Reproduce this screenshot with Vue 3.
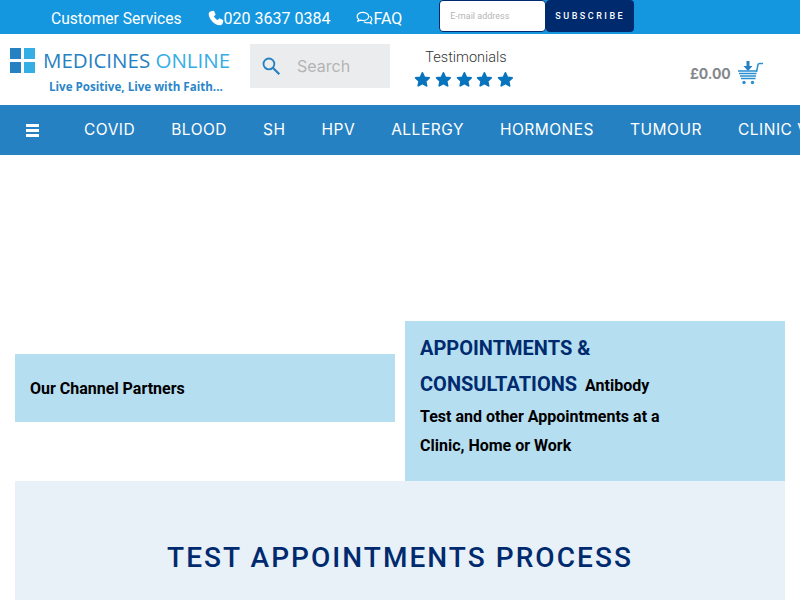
<template>
  <div class="page">
    <div class="topbar">
      <span class="top-item services">Customer Services</span>
      <span class="top-item phone">
        <svg class="ico" viewBox="0 0 24 24" width="16" height="16"><path fill="#fff" d="M5.500 1.500 9 1l2.500 6-2.600 2.200c1 2.400 3.200 4.600 5.700 5.800L17 12.500l6 2.700-.6 3.600C22 21 20.500 23 18 23 9.500 22.500 1.500 14 1 6c0-2.200 2-4 4.500-4.500z"/></svg>020 3637 0384
      </span>
      <span class="top-item faq">
        <svg class="ico" viewBox="0 0 24 20" width="17" height="14"><g fill="none" stroke="#fff" stroke-width="1.700"><path d="M9.500 2C5 2 1.500 4.500 1.500 7.800c0 1.600.8 3 2.200 4l-1.200 2.700 3.600-1.500c1.200.4 2.500.6 3.900.6 4.500 0 8-2.600 8-5.800S14 2 9.500 2z"/><path d="M19.500 7.500c1.900 1 3 2.500 3 4.300 0 1.300-.7 2.500-1.800 3.400l1 2.800-3.400-1.500c-2.500.7-5.300.3-7.300-1"/></g></svg>FAQ
      </span>
      <form class="subscribe" @submit.prevent>
        <input class="email" type="text" placeholder="E-mail address" />
        <button class="sub-btn" type="button">SUBSCRIBE</button>
      </form>
    </div>

    <header class="header">
      <div class="logo">
        <div class="logo-top">
          <span class="squares"><i class="dk"></i><i class="lt"></i><i class="dk"></i><i class="lt"></i></span>
          <span class="logo-name">MEDICINES <b>ONLINE</b></span>
        </div>
        <div class="tagline">Live Positive, Live with Faith...</div>
      </div>
      <div class="search">
        <svg viewBox="0 0 24 24" width="20" height="20"><circle cx="9.500" cy="9.500" r="6.500" fill="none" stroke="#2681c2" stroke-width="2.200"/><path d="M14.500 14.500 22 22" stroke="#2681c2" stroke-width="2.600"/></svg>
        <span class="search-text">Search</span>
      </div>
      <div class="testimonials">
        <div class="test-label">Testimonials</div>
        <div class="stars">
          <svg v-for="n in 5" :key="n" viewBox="0 0 24 24" width="17" height="17"><path fill="#0874bd" stroke="#0874bd" stroke-width="2.400" stroke-linejoin="round" d="M12 2.500l2.900 6.300 6.800.8-5 4.700 1.300 6.800-6-3.400-6 3.400 1.300-6.800-5-4.700 6.800-.8z"/></svg>
        </div>
      </div>
      <div class="cart">
        <span class="price">£0.00</span>
        <svg viewBox="0 0 26 24" width="26" height="24">
          <path fill="#2681c2" d="M8.500 0h3v5h3l-4.500 5-4.500-5h3z"/>
          <path fill="none" stroke="#2a90d0" stroke-width="1.500" d="M18.500 11 20 3.500Q20.300 2.500 21.500 2.500H25"/>
          <path stroke="#2a90d0" stroke-width="1.600" d="M0 10h19M1 12.500h17.500M2 15h16M3 17.500h14.500"/>
          <circle cx="6" cy="21.500" r="1.700" fill="#2a90d0"/><circle cx="14.500" cy="21.500" r="1.700" fill="#2a90d0"/>
        </svg>
      </div>
    </header>

    <nav class="nav">
      <span class="burger"><i></i><i></i><i></i></span>
      <a v-for="item in navItems" :key="item" class="nav-link">{{ item }}</a>
    </nav>

    <div class="spacer"></div>

    <section class="cards">
      <div class="card partners">Our Channel Partners</div>
      <div class="card appts">
        <span class="appts-title">APPOINTMENTS &amp;</span> <span class="appts-title">CONSULTATIONS</span>&nbsp; Antibody Test and other Appointments at a Clinic, Home or Work
      </div>
    </section>

    <section class="process">
      <h2>TEST APPOINTMENTS PROCESS</h2>
    </section>
  </div>
</template>

<script setup>
const navItems = ['COVID', 'BLOOD', 'SH', 'HPV', 'ALLERGY', 'HORMONES', 'TUMOUR', 'CLINIC VISITS']
</script>

<style>
html, body {
  margin: 0;
  overflow: hidden;
}
</style>

<style scoped>
.page {
  width: 800px;
  height: 600px;
  overflow: hidden;
  background: #fff;
  font-family: Roboto, "Liberation Sans", sans-serif;
}

.topbar {
  height: 34px;
  background: #1597df;
  display: flex;
  color: #fff;
  font-size: 16px;
}

.top-item {
  display: flex;
  align-items: center;
  height: 36px;
  white-space: nowrap;
}

.services { margin-left: 51px; font-size: 15.600px; height: 37px; }
.phone { margin-left: 26px; }
.faq { margin-left: 26px; }
.ico { flex: none; }

.subscribe {
  display: flex;
  margin-left: 37px;
  height: 32px;
}

.email {
  width: 107px;
  height: 32px;
  box-sizing: border-box;
  border: 1px solid #002a6e;
  border-radius: 4px;
  background: #fff;
  padding: 0 10px;
  font-family: Roboto, sans-serif;
  font-size: 9px;
  outline: none;
}

.email::placeholder { color: #b5b5b5; }

.sub-btn {
  width: 88px;
  height: 32px;
  border: none;
  border-radius: 4px;
  background: #002a6e;
  color: #fff;
  font-family: Roboto, sans-serif;
  font-size: 9px;
  font-weight: 500;
  letter-spacing: 2.500px;
  padding: 0;
}

.header {
  height: 71px;
  display: flex;
  align-items: flex-start;
}

.logo {
  width: 240px;
  padding: 12px 0 0 10px;
  box-sizing: border-box;
}

.logo-top {
  display: flex;
  align-items: center;
  gap: 8px;
}

.squares {
  display: grid;
  grid-template-columns: 11px 11px;
  grid-template-rows: 11px 11px;
  gap: 3px;
}

.squares i { display: block; }
.dk { background: #2681c2; }
.lt { background: #35ade5; }

.logo-name {
  font-family: "Open Sans", sans-serif;
  font-size: 20.500px;
  line-height: 28px;
  color: #2681c2;
  white-space: nowrap;
}

.logo-name b {
  font-weight: 400;
  color: #35ade5;
}

.tagline {
  margin: 5px 0 0 39px;
  font-family: "Open Sans", sans-serif;
  font-size: 11.600px;
  font-weight: 700;
  color: #2b86c9;
  white-space: nowrap;
}

.search {
  margin: 10px 0 0 10px;
  width: 140px;
  height: 44px;
  background: #ebecee;
  display: flex;
  align-items: center;
  padding-left: 11px;
  box-sizing: border-box;
}

.search-text {
  margin-left: 16px;
  font-family: Inter, sans-serif;
  font-size: 16px;
  color: #b4b4b4;
}

.testimonials {
  margin: 14px 0 0 24px;
  width: 100px;
  text-align: center;
}

.test-label {
  padding-left: 4px;
  font-size: 14.500px;
  font-weight: 300;
  line-height: 20px;
  color: #333;
}

.stars {
  display: flex;
  gap: 4px;
  margin-top: 3px;
}

.cart {
  margin: 27px 0 0 176px;
  display: flex;
  align-items: center;
  gap: 7px;
}

.price {
  font-family: Inter, sans-serif;
  font-size: 14px;
  font-weight: 700;
  letter-spacing: -0.100px;
  color: #84878b;
}

.nav {
  height: 50px;
  background: #2681c2;
  display: flex;
  align-items: center;
  color: #fff;
  overflow: hidden;
  white-space: nowrap;
}

.burger {
  flex: none;
  margin-left: 26px;
  margin-right: 45px;
  width: 13px;
  display: flex;
  flex-direction: column;
  gap: 2px;
}

.burger i {
  height: 3px;
  background: #fff;
}

.nav-link {
  flex: none;
  font-family: Inter, sans-serif;
  font-size: 15.500px;
  letter-spacing: 0.500px;
  margin-right: 36px;
  position: relative;
  top: -1px;
}

.spacer { height: 166px; }

.cards {
  display: flex;
  gap: 10px;
  padding: 0 15px;
  height: 160px;
  align-items: flex-start;
}

.card {
  width: 380px;
  box-sizing: border-box;
  background: #b6def1;
  padding: 0 15px;
  color: #000;
  font-size: 16px;
  font-weight: 700;
}

.partners {
  margin-top: 33px;
  height: 68px;
  line-height: 69px;
}

.appts {
  height: 160px;
  padding-top: 10.400px;
  padding-right: 110px;
  line-height: 29px;
}

.appts-title {
  font-size: 20px;
  line-height: 35.500px;
  color: #002a6e;
}

.process {
  margin: 0 15px;
  height: 200px;
  background: #e8f0f8;
  text-align: center;
}

.process h2 {
  margin: 0;
  padding-top: 59px;
  font-size: 28px;
  font-weight: 500;
  line-height: 36px;
  letter-spacing: 2.050px;
  color: #002a6e;
}
</style>
